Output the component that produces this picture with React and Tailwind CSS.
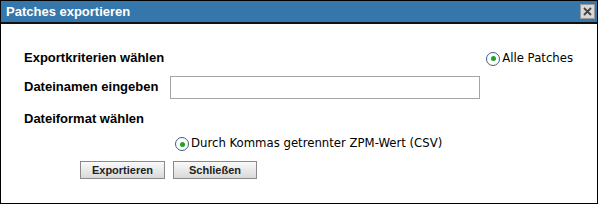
export default function App() {
  return (
    <div className="w-[598px] h-[204px] bg-white border border-black flex flex-col font-['DejaVu_Sans',sans-serif] overflow-hidden">
      <div className="h-[23px] bg-[#3677ab] border-b-2 border-[#111] flex items-center justify-between pl-[5px] pr-[2px] shrink-0">
        <span className="text-white font-bold text-[13px] leading-none font-['Liberation_Sans',sans-serif]">Patches exportieren</span>
        <button className="w-[15px] h-[15px] bg-[#d8d8d8] border border-[#999] flex items-center justify-center">
          <svg width="11" height="11" viewBox="0 0 11 11">
            <path d="M2 2L9 9M9 2L2 9" stroke="#444" strokeWidth="1.8" />
          </svg>
        </button>
      </div>

      <div className="flex flex-col pl-[23px] pr-[24px] pt-[26px] text-[11.7px] text-black">
        <div className="flex items-center justify-between h-[16px]">
          <span className="font-['Liberation_Sans',sans-serif] font-bold text-[13px]">Exportkriterien wählen</span>
          <span className="mt-[1px]">
            <Radio label="Alle Patches" />
          </span>
        </div>

        <div className="flex items-center mt-[9px] h-[24px]">
          <span className="w-[146px] font-['Liberation_Sans',sans-serif] font-bold text-[13px]">Dateinamen eingeben</span>
          <input className="w-[310px] h-[23px] border border-[#a5a5a5] outline-none" />
        </div>

        <div className="flex items-center mt-[12px] h-[16px]">
          <span className="font-['Liberation_Sans',sans-serif] font-bold text-[13px]">Dateiformat wählen</span>
        </div>

        <div className="flex items-center mt-[9px] pl-[151px] h-[16px]">
          <Radio label="Durch Kommas getrennter ZPM-Wert (CSV)" />
        </div>

        <div className="flex gap-[8px] mt-[9px] pl-[56px]">
          <Button label="Exportieren" w="w-[85px]" />
          <Button label="Schließen" w="w-[84px]" />
        </div>
      </div>
    </div>
  );
}

function Radio({ label }) {
  return (
    <span className="flex items-center gap-[2px]">
      <span className="w-[14px] h-[14px] rounded-full border border-[#3b5f86] bg-white flex items-center justify-center">
        <span className="w-[5px] h-[5px] rounded-full bg-[#21a321]" />
      </span>
      <span className="leading-none">{label}</span>
    </span>
  );
}

function Button({ label, w }) {
  return (
    <button
      className={`${w} h-[18px] border border-[#8a8a8a] bg-gradient-to-b from-[#fafafa] to-[#d9d9d9] font-['Liberation_Sans',sans-serif] font-bold text-[11px] text-[#222] leading-none`}
    >
      {label}
    </button>
  );
}
